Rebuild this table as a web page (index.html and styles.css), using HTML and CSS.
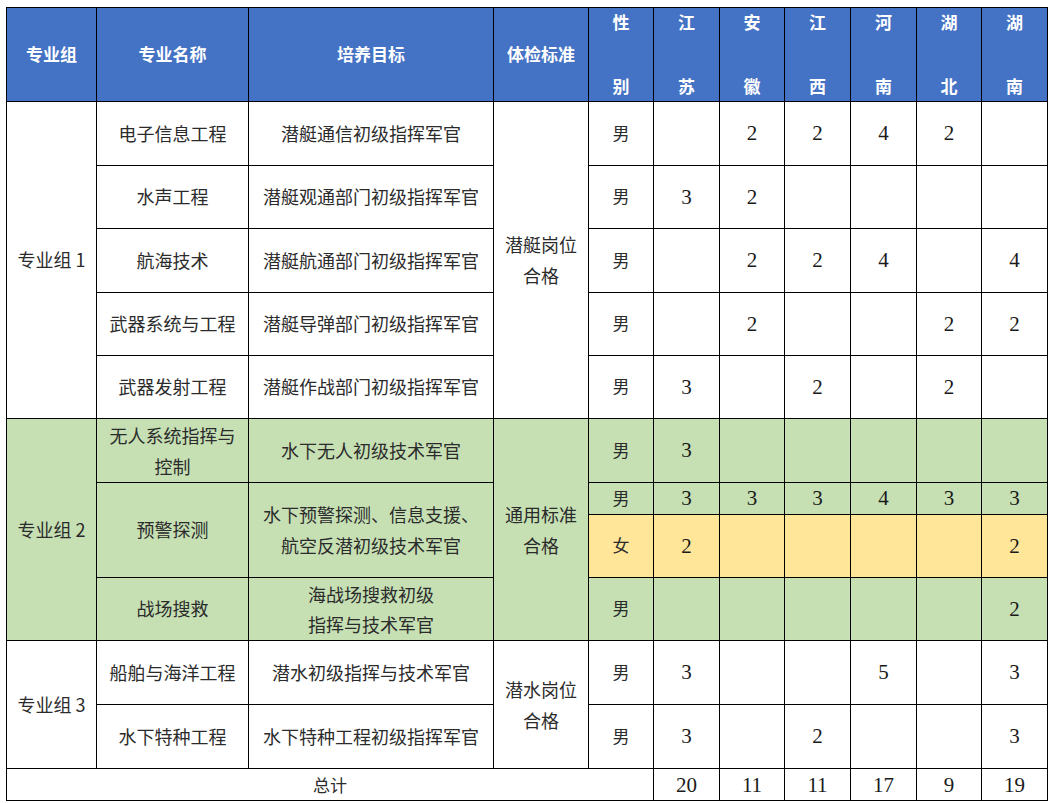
FILE: index.html
```html
<!DOCTYPE html>
<html lang="zh-CN">
<head>
<meta charset="utf-8">
<title>专业招生计划</title>
<link rel="stylesheet" href="styles.css">
</head>
<body>
<div class="wrap">
<table class="plan">
  <colgroup>
    <col class="c-group"><col class="c-name"><col class="c-goal"><col class="c-std"><col class="c-sex">
    <col class="c-p"><col class="c-p2"><col class="c-p"><col class="c-p"><col class="c-p2"><col class="c-p">
  </colgroup>
  <thead>
    <tr class="r-head">
      <th>专业组</th>
      <th>专业名称</th>
      <th>培养目标</th>
      <th>体检标准</th>
      <th><div class="vt"><span>性</span><span>别</span></div></th>
      <th><div class="vt"><span>江</span><span>苏</span></div></th>
      <th><div class="vt"><span>安</span><span>徽</span></div></th>
      <th><div class="vt"><span>江</span><span>西</span></div></th>
      <th><div class="vt"><span>河</span><span>南</span></div></th>
      <th><div class="vt"><span>湖</span><span>北</span></div></th>
      <th><div class="vt"><span>湖</span><span>南</span></div></th>
    </tr>
  </thead>
  <tbody>
    <tr class="r64">
      <td rowspan="5">专业组 1</td>
      <td>电子信息工程</td>
      <td>潜艇通信初级指挥军官</td>
      <td rowspan="5" class="ml">潜艇岗位<br>合格</td>
      <td class="sex">男</td>
      <td class="n"></td><td class="n">2</td><td class="n">2</td><td class="n">4</td><td class="n">2</td><td class="n"></td>
    </tr>
    <tr class="r63">
      <td>水声工程</td>
      <td>潜艇观通部门初级指挥军官</td>
      <td class="sex">男</td>
      <td class="n">3</td><td class="n">2</td><td class="n"></td><td class="n"></td><td class="n"></td><td class="n"></td>
    </tr>
    <tr class="r64">
      <td>航海技术</td>
      <td>潜艇航通部门初级指挥军官</td>
      <td class="sex">男</td>
      <td class="n"></td><td class="n">2</td><td class="n">2</td><td class="n">4</td><td class="n"></td><td class="n">4</td>
    </tr>
    <tr class="r63">
      <td>武器系统与工程</td>
      <td>潜艇导弹部门初级指挥军官</td>
      <td class="sex">男</td>
      <td class="n"></td><td class="n">2</td><td class="n"></td><td class="n"></td><td class="n">2</td><td class="n">2</td>
    </tr>
    <tr class="r63">
      <td>武器发射工程</td>
      <td>潜艇作战部门初级指挥军官</td>
      <td class="sex">男</td>
      <td class="n">3</td><td class="n"></td><td class="n">2</td><td class="n"></td><td class="n">2</td><td class="n"></td>
    </tr>

    <tr class="r64 green">
      <td rowspan="4">专业组 2</td>
      <td class="ml">无人系统指挥与<br>控制</td>
      <td>水下无人初级技术军官</td>
      <td rowspan="4" class="ml">通用标准<br>合格</td>
      <td class="sex">男</td>
      <td class="n">3</td><td class="n"></td><td class="n"></td><td class="n"></td><td class="n"></td><td class="n"></td>
    </tr>
    <tr class="r32 green">
      <td rowspan="2">预警探测</td>
      <td rowspan="2" class="ml">水下预警探测、信息支援、<br>航空反潜初级技术军官</td>
      <td class="sex">男</td>
      <td class="n">3</td><td class="n">3</td><td class="n">3</td><td class="n">4</td><td class="n">3</td><td class="n">3</td>
    </tr>
    <tr class="r63 yellow">
      <td class="sex">女</td>
      <td class="n">2</td><td class="n"></td><td class="n"></td><td class="n"></td><td class="n"></td><td class="n">2</td>
    </tr>
    <tr class="r63 green">
      <td>战场搜救</td>
      <td class="ml tight">海战场搜救初级<br>指挥与技术军官</td>
      <td class="sex">男</td>
      <td class="n"></td><td class="n"></td><td class="n"></td><td class="n"></td><td class="n"></td><td class="n">2</td>
    </tr>

    <tr class="r64">
      <td rowspan="2">专业组 3</td>
      <td>船舶与海洋工程</td>
      <td>潜水初级指挥与技术军官</td>
      <td rowspan="2" class="ml">潜水岗位<br>合格</td>
      <td class="sex">男</td>
      <td class="n">3</td><td class="n"></td><td class="n"></td><td class="n">5</td><td class="n"></td><td class="n">3</td>
    </tr>
    <tr class="r64">
      <td>水下特种工程</td>
      <td>水下特种工程初级指挥军官</td>
      <td class="sex">男</td>
      <td class="n">3</td><td class="n"></td><td class="n">2</td><td class="n"></td><td class="n"></td><td class="n">3</td>
    </tr>

    <tr class="r32 total">
      <td colspan="5" class="sum">总计</td>
      <td class="n">20</td><td class="n">11</td><td class="n">11</td><td class="n">17</td><td class="n">9</td><td class="n">19</td>
    </tr>
  </tbody>
</table>
</div>
</body>
</html>
```

FILE: styles.css
```css
html, body {
  margin: 0;
  padding: 0;
  background: #ffffff;
}

.wrap {
  padding: 7px 0 0 6px;
}

.plan {
  border-collapse: collapse;
  table-layout: fixed;
  width: 1042px;
  font-family: "Noto Sans CJK SC", "Liberation Serif", serif;
  font-size: 18px;
  color: #2b2b2b;
}

.c-group { width: 90px; }
.c-name { width: 152px; }
.c-goal { width: 245px; }
.c-std { width: 95px; }
.c-sex { width: 65px; }
.c-p { width: 66px; }
.c-p2 { width: 65px; }

.plan th,
.plan td {
  border: 1px solid #000000;
  padding: 0 0 2px;
  text-align: center;
  vertical-align: middle;
  line-height: 24px;
  white-space: nowrap;
}

.plan th {
  background: #4472c4;
  color: #ffffff;
  font-family: "Noto Sans CJK SC", sans-serif;
  font-weight: 700;
  font-size: 17px;
}

.r-head { height: 94px; }
.r64 { height: 64px; }
.r63 { height: 63px; }
.r32 { height: 32px; }

.plan th .vt {
  display: flex;
  flex-direction: column;
  justify-content: space-between;
  align-items: center;
  height: 91px;
  padding: 4px 0 3px;
  box-sizing: border-box;
  line-height: 20px;
}

.plan td.ml {
  line-height: 31px;
  padding-bottom: 0;
}

.plan td.ml.tight {
  line-height: 30px;
}

.plan td.sex {
  font-size: 17px;
}

.plan td.n {
  font-family: "Liberation Serif", "Noto Sans CJK SC", serif;
  font-size: 21px;
  color: #1a1a1a;
  padding-bottom: 1px;
}

.green td {
  background: #c6e0b4;
}

.yellow td {
  background: #ffe699;
}

.plan td.sum {
  font-size: 17px;
}

.plan .total td {
  line-height: 28px;
  padding-bottom: 0;
}
```
